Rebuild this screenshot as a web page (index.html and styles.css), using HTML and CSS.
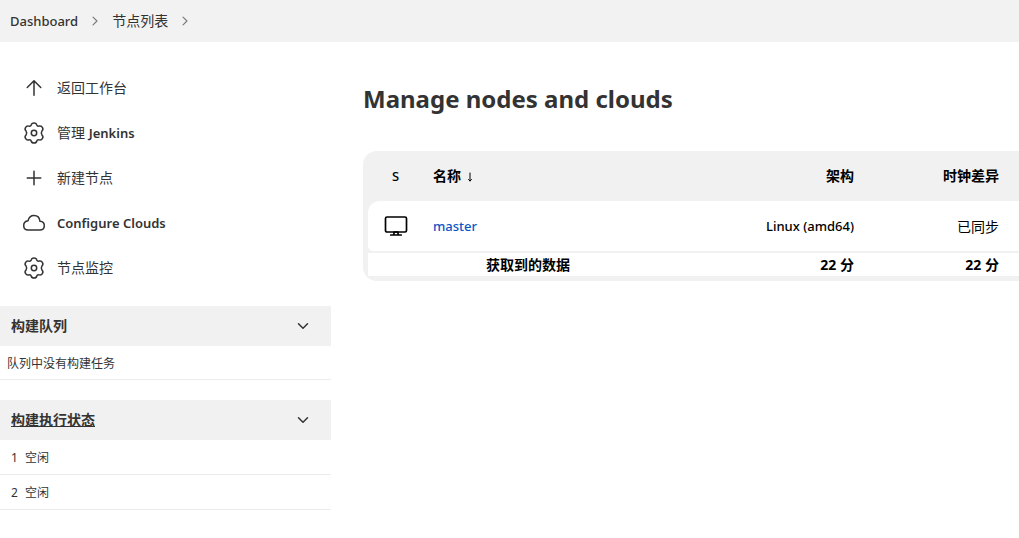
FILE: index.html
```html
<!DOCTYPE html>
<html lang="zh-CN">
<head>
<meta charset="utf-8">
<meta name="viewport" content="width=device-width, initial-scale=1">
<title>节点列表 [Jenkins]</title>
<link rel="stylesheet" href="styles.css">
</head>
<body>
<svg class="symbols" aria-hidden="true">
  <symbol id="chevron" viewBox="0 0 512 512"><path d="M184 112l144 144-144 144"/></symbol>
  <symbol id="chevron-down" viewBox="0 0 512 512"><path d="M112 184l144 144 144-144"/></symbol>
  <symbol id="arrow-up" viewBox="0 0 512 512"><path d="M112 244l144-144 144 144M256 120v292"/></symbol>
  <symbol id="arrow-down" viewBox="0 0 12 12"><path d="M6 2v8M4.500 8.500L6 10l1.500-1.500"/></symbol>
  <symbol id="plus" viewBox="0 0 512 512"><path d="M256 112v288M400 256H112"/></symbol>
  <symbol id="cloud" viewBox="0 0 24 24"><path d="M6.300 19C3.500 19 1.700 17 1.700 14.400C1.700 11.800 3.500 10 6.100 9.700C6.800 6.400 9 4.500 12 4.500C15.300 4.500 17.600 6.700 18 10.300C20.600 10.500 22.300 12.200 22.300 14.700C22.300 17.400 20.400 19 17.800 19Z"/></symbol>
  <symbol id="gear" viewBox="0 0 24 24"><circle cx="12" cy="12" r="2.700"/><path d="M9.200 4C9.500 2.600 10.500 2 12 2S14.500 2.600 14.800 4Q15.300 5.600 17.200 5.100C18.700 4.700 19.800 5.300 20.500 6.600S21 9.100 20 9.900Q18.600 12 20 14.100C21 14.900 21.200 16.100 20.500 17.400S18.700 19.300 17.200 18.900Q15.300 18.400 14.800 20C14.500 21.400 13.500 22 12 22S9.500 21.400 9.200 20Q8.700 18.400 6.800 18.900C5.300 19.300 4.200 18.700 3.500 17.400S3 14.900 4 14.100Q5.400 12 4 9.900C3 9.100 2.800 7.900 3.500 6.600S5.300 4.700 6.800 5.100Q8.700 5.600 9.200 4Z"/></symbol>
  <symbol id="desktop" viewBox="0 0 512 512"><rect x="32" y="64" width="448" height="320" rx="32"/><path d="M304 448l-8-64h-80l-8 64zM368 448H144"/></symbol>
</svg>

<nav class="breadcrumbs" aria-label="breadcrumb">
  <a class="latin" href="#">Dashboard</a>
  <svg class="separator"><use href="#chevron"/></svg>
  <a href="#">节点列表</a>
  <svg class="separator"><use href="#chevron"/></svg>
</nav>

<div class="page">
  <aside class="side">
    <nav class="tasks">
      <a class="task" href="#"><svg class="icon"><use href="#arrow-up"/></svg><span>返回工作台</span></a>
      <a class="task" href="#"><svg class="icon rounded"><use href="#gear"/></svg><span>管理 <span class="strong">Jenkins</span></span></a>
      <a class="task" href="#"><svg class="icon"><use href="#plus"/></svg><span>新建节点</span></a>
      <a class="task" href="#"><svg class="icon rounded"><use href="#cloud"/></svg><span class="strong">Configure Clouds</span></a>
      <a class="task" href="#"><svg class="icon rounded"><use href="#gear"/></svg><span>节点监控</span></a>
    </nav>

    <section class="pane">
      <header class="pane-header">
        <h2 class="pane-title">构建队列</h2>
        <button class="toggle" type="button" aria-label="折叠构建队列"><svg><use href="#chevron-down"/></svg></button>
      </header>
      <p class="pane-row pane-empty">队列中没有构建任务</p>
    </section>

    <section class="pane">
      <header class="pane-header">
        <h2 class="pane-title"><a href="#">构建执行状态</a></h2>
        <button class="toggle" type="button" aria-label="折叠构建执行状态"><svg><use href="#chevron-down"/></svg></button>
      </header>
      <ol class="executors">
        <li class="pane-row"><span>1</span><span>空闲</span></li>
        <li class="pane-row"><span>2</span><span>空闲</span></li>
      </ol>
    </section>
  </aside>

  <main class="main">
    <h1 class="title">Manage nodes and clouds</h1>
    <div class="table-wrap">
      <table class="nodes">
        <colgroup><col class="col-status"><col class="col-name"><col><col class="col-clock"></colgroup>
        <thead>
          <tr><th class="status">S</th><th class="name">名称<svg class="sort" role="img" aria-label="降序"><use href="#arrow-down"/></svg></th><th>架构</th><th>时钟差异</th></tr>
        </thead>
        <tbody>
          <tr class="node">
            <td class="status"><svg class="desktop" role="img" aria-label="在线"><use href="#desktop"/></svg></td>
            <td class="name"><a href="#">master</a></td>
            <td>Linux (amd64)</td>
            <td class="clock">已同步</td>
          </tr>
          <tr class="summary"><th></th><th class="obtained">获取到的数据</th><th>22 分</th><th>22 分</th></tr>
        </tbody>
      </table>
    </div>
  </main>
</div>
</body>
</html>
```
FILE: styles.css
```css
* {
  box-sizing: border-box;
}

body {
  margin: 0;
  background: #fff;
  color: #333;
  font-family: "Noto Sans", "Noto Sans CJK SC", sans-serif;
  font-size: 13px;
  font-weight: 500;
}

a {
  color: inherit;
  text-decoration: none;
}

svg {
  display: block;
  fill: none;
  stroke: currentColor;
  stroke-linecap: round;
  stroke-linejoin: round;
  stroke-width: 32;
}

.symbols {
  display: none;
}

.breadcrumbs {
  display: flex;
  align-items: center;
  gap: 10px;
  height: 42px;
  padding: 0 10px;
  background: #f2f2f2;
  font-size: 14px;
  font-weight: 400;
  line-height: 20px;
}

.latin {
  font-size: 13px;
  font-weight: 500;
}

.separator {
  width: 14px;
  height: 14px;
  color: #777;
  stroke-width: 40;
}

.page {
  display: flex;
}

.side {
  flex: 0 0 331px;
}

.tasks {
  display: flex;
  flex-direction: column;
  padding: 23px 0 16px;
}

.task {
  display: flex;
  align-items: center;
  gap: 11px;
  height: 45px;
  padding-left: 22px;
  font-size: 14px;
  font-weight: 400;
  line-height: 20px;
}

.strong {
  font-size: 13px;
  font-weight: 600;
}

.icon {
  width: 24px;
  height: 24px;
}

.rounded {
  stroke-width: 1.5;
}

.pane {
  margin-bottom: 20px;
}

.pane-header {
  display: flex;
  align-items: center;
  justify-content: space-between;
  height: 40px;
  padding: 0 20px 0 11px;
  background: #f1f1f1;
}

.pane-title {
  margin: 0;
  font-size: 14px;
  font-weight: 700;
  line-height: 18px;
}

.pane-title a {
  text-decoration: underline;
}

.toggle {
  padding: 0;
  border: 0;
  background: none;
  color: inherit;
}

.toggle svg {
  width: 16px;
  height: 16px;
  stroke-width: 48;
}

.pane-row {
  display: flex;
  align-items: center;
  gap: 7px;
  height: 35px;
  margin: 0;
  padding-left: 11px;
  border-bottom: 1px solid #ececec;
  font-size: 12px;
  font-weight: 400;
}

.pane-empty {
  height: 34px;
  padding-left: 7px;
}

.executors {
  margin: 0;
  padding: 0;
  list-style: none;
}

.main {
  flex: 1;
  min-width: 0;
  padding: 40px 0 0 32px;
}

.title {
  margin: 0 0 35px;
  font-size: 24px;
  font-weight: 700;
  line-height: 34px;
}

.table-wrap {
  padding: 0 0 5px 5px;
  border-radius: 14px 0 0 14px;
  background: #f1f1f1;
  color: #000;
}

.nodes {
  width: 100%;
  border-collapse: separate;
  border-spacing: 0;
  table-layout: fixed;
  text-align: right;
}

.col-status {
  width: 55px;
}

.col-name {
  width: 212px;
}

.col-clock {
  width: 145px;
}

.nodes th,
.nodes td {
  height: 50px;
  padding: 0 20px 0 0;
}

.nodes th {
  font-size: 14px;
  font-weight: 700;
  line-height: 20px;
}

.nodes .status {
  padding: 0;
  text-align: center;
  font-size: 13px;
  font-weight: 500;
}

.nodes .name {
  padding-left: 10px;
  text-align: left;
}

.nodes .clock {
  font-size: 14px;
  font-weight: 400;
}

.name a {
  color: #0b55c4;
  font-weight: 500;
}

.sort {
  display: inline-block;
  width: 12px;
  height: 12px;
  margin-left: 3px;
  stroke-width: 1;
  vertical-align: middle;
}

.desktop {
  width: 24px;
  height: 24px;
  margin: 0 auto;
  stroke-width: 36;
}

.node td {
  background: #fff;
}

.node td:first-child {
  border-radius: 12px 0 0 5px;
}

.summary th {
  height: 25px;
  border-top: 2px solid #f1f1f1;
  background: #fff;
}

.nodes .obtained {
  padding: 0 2px 0 0;
  text-align: center;
}
```
